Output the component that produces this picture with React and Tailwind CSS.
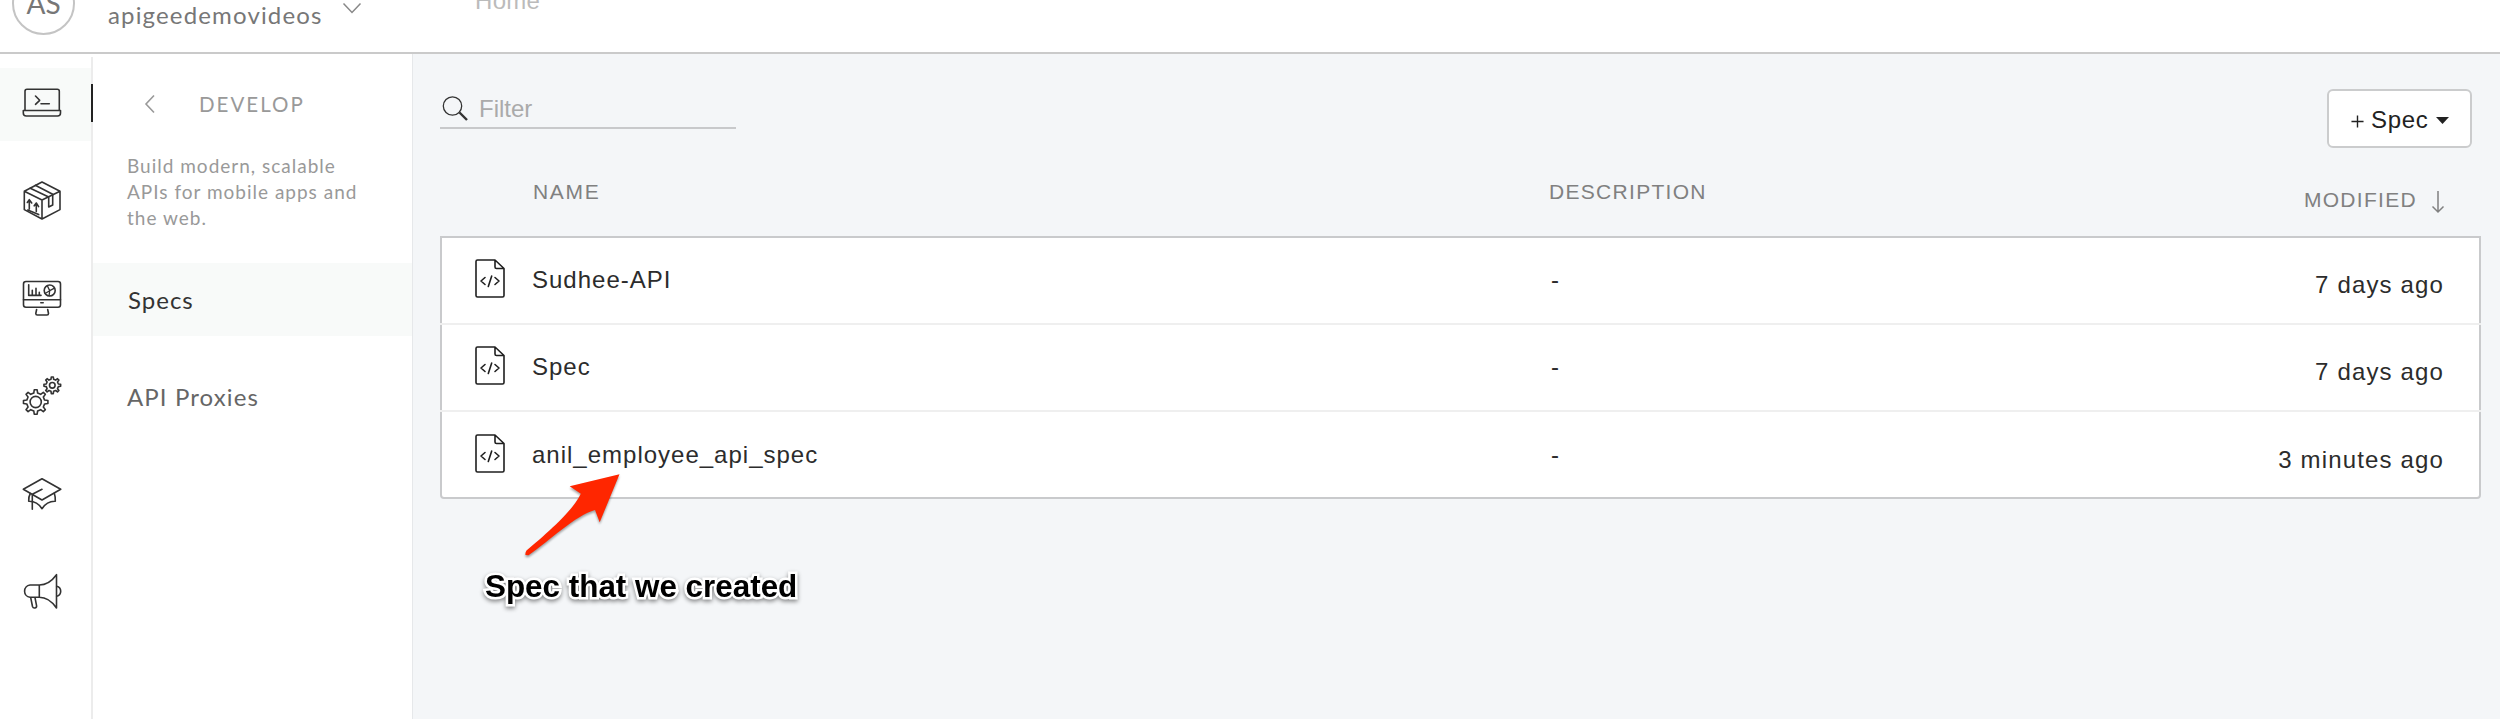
import React from "react";

function gearPath(cx, cy, outer, inner, teeth) {
  const pts = [];
  const step = (Math.PI * 2) / teeth;
  const at = (r, a) => `${(cx + r * Math.cos(a)).toFixed(2)} ${(cy + r * Math.sin(a)).toFixed(2)}`;
  for (let i = 0; i < teeth; i++) {
    const a = i * step - Math.PI / 2;
    pts.push(at(inner, a - step * 0.27), at(outer, a - step * 0.15), at(outer, a + step * 0.15), at(inner, a + step * 0.27));
  }
  return `M${pts.join("L")}Z`;
}

function RailIcon({ children }) {
  return (
    <svg className="h-10 w-10 overflow-visible" viewBox="0 0 40 40" fill="none" stroke="#333" strokeWidth="1.6" strokeLinecap="round" strokeLinejoin="round">
      {children}
    </svg>
  );
}

const railIcons = [
  <RailIcon key="develop">
    <path d="M3 26.3V7.3q0-2 2-2h30.300q2 0 2 2v19" />
    <path d="M1.300 26.500h37.200v2.500q0 3-3 3H4.300q-3 0-3-3z" />
    <path d="M13.500 12l4.200 4.300-4.200 4M19 19.700h8.300" />
  </RailIcon>,
  <RailIcon key="publish">
    <path d="M20 0L38 9.300V27.600L20 37 2.300 27.600V9.300zM2.300 9.300L20 18l18-8.700M20 18v19" />
    <path d="M8.300 6.200L26.700 15v10l4-2V12.300L13.300 3.300" />
    <path d="M7.300 27V18M5.300 20.500L7.300 17.700l2.400 3.300M14.300 29.500V21.300M12.200 23.800l2.100-2.800 2.300 3.600M5.700 28l11 4.600" />
  </RailIcon>,
  <RailIcon key="analyze">
    <rect x="1.500" y="1.500" width="37" height="25.800" rx="2.500" />
    <path d="M1.500 19.700h37M18.800 22.700h2.400M14.600 29.500l-.8 4q0 1.500 1.500 1.500h9.700q1.500 0 1.500-1.500l-.8-4" />
    <path d="M6.700 4.800v10.600H19M10.300 15V10.200M14 15V8.200M17.300 15V12.200" />
    <circle cx="27.700" cy="10.500" r="5.500" />
    <path d="M32.500 8.200l-4.800 2.500-4.700 2.800M27.700 10.700L25.300 5.600M27.700 10.700l-.6 5" strokeWidth="1.3" />
  </RailIcon>,
  <RailIcon key="admin">
    <path d={gearPath(13.7, 24, 12.300, 9.100, 8)} />
    <circle cx="13.700" cy="24" r="5.600" />
    <path d={gearPath(30.300, 7.300, 8.400, 6.200, 8)} />
    <circle cx="30.300" cy="7.300" r="2.800" />
  </RailIcon>,
  <RailIcon key="learn">
    <path d="M20 2.700L38.700 13.300 20 24 1.300 13.300zM20 13.300l-9.700 5v15" />
    <path d="M8.300 17.500q-2 3.500-1.600 7.800 8.300-.3 13.300 7.400 5-7.700 13.300-7.400.2-4.500-1-8" />
  </RailIcon>,
  <RailIcon key="announce">
    <path d="M17.300 11H8a6.200 6.200 0 0 0 0 12.300h9.300zM17.300 11Q27 11 34.500.7V34Q27 23.300 17.300 23.300" />
    <path d="M34.700 12.300q4 1 4 5t-4 5M8.700 23.700l1.800 8.800q.6 1.800 2.300 1.500 2-.4 1.800-2.200L13 23.700" />
  </RailIcon>,
];

function FileIcon() {
  return (
    <svg className="h-10 w-8 shrink-0" viewBox="0 0 32 40" fill="none" stroke="#1f1f1f" strokeWidth="1.600" strokeLinejoin="round" strokeLinecap="round">
      <path d="M21 1H3.500Q2 1 2 2.500v34Q2 38 3.500 38h25q1.500 0 1.500-1.500V9.500zv7q0 1.500 1.500 1.500H30" />
      <path d="M11 18.500l-4 3.500 4 3.500M21 18.500l4 3.500-4 3.500M17.700 17l-3.400 10.500" />
    </svg>
  );
}

const specs = [
  { name: "Sudhee-API", modified: "7 days ago" },
  { name: "Spec", modified: "7 days ago" },
  { name: "anil_employee_api_spec", modified: "3 minutes ago" },
];

export default function App() {
  return (
    <div className="relative flex h-[719px] w-[2500px] flex-col overflow-hidden bg-white font-['Liberation_Sans',Arial,sans-serif]">
      <header className="-mt-[46px] flex h-[100px] shrink-0 items-center border-b-2 border-[#cacaca] bg-white pl-3">
        <div className="flex h-[63px] w-[63px] items-center justify-center rounded-full border-2 border-[#c4c4c4] font-[Lato,sans-serif] text-[28px] text-[#777]">AS</div>
        <div className="mt-[24px] ml-[33px] w-[234px] font-[Lato,sans-serif] text-[24px] leading-[30px] tracking-[1.150px] text-[#777]">apigeedemovideos</div>
        <svg className="mt-[9px] h-3 w-5" viewBox="0 0 20 12" fill="none" stroke="#888" strokeWidth="1.500"><path d="M1.500 1.500L10 10.500l8.500-9" /></svg>
        <div className="-mt-[5px] ml-[113px] text-[24px] leading-[30px] tracking-[0.300px] text-[#bbb]">Home</div>
      </header>

      <div className="flex min-h-0 flex-1">
        <nav className="flex w-[91px] shrink-0 flex-col gap-[25px] pt-[14px]">
          {railIcons.map((icon, i) => (
            <div key={i} className={i === 0 ? "flex h-[73px] bg-[#f8faf9] pt-4 pl-[22px]" : "flex h-[73px] pt-4 pl-[22px]"}>{icon}</div>
          ))}
        </nav>
        <div className="mt-[3px] w-[2px] shrink-0 bg-[#ececec] pt-[27px]">
          <div className="h-[38px] bg-[#222]" />
        </div>

        <aside className="flex w-[320px] shrink-0 flex-col border-r border-[#e6e8ea] font-[Lato,sans-serif]">
          <div className="mt-[35px] flex h-[30px] items-center pl-[51px]">
            <svg className="h-5 w-3" viewBox="0 0 12 20" fill="none" stroke="#999" strokeWidth="1.600"><path d="M10 1.500L2 10l8 8.500" /></svg>
            <span className="ml-[43px] text-[20.500px] tracking-[2px] text-[#999]">DEVELOP</span>
          </div>
          <p className="mt-[34px] pl-[34px] text-[19px] leading-[26px] tracking-[1px] text-[#999]">
            Build modern, scalable<br />APIs for mobile apps and<br />the web.
          </p>
          <div className="mt-[32px] flex h-[73px] items-center bg-[#f8faf9] pl-[35px] text-[24px] tracking-[1px] text-[#333]">Specs</div>
          <div className="mt-[24px] flex h-[73px] items-center pl-[34px] text-[24px] tracking-[1.100px] text-[#666]">API Proxies</div>
        </aside>

        <main className="flex flex-1 flex-col bg-[#f4f6f8] pr-[19px] pl-[27px]">
          <div className="flex h-[94px] items-start justify-between pt-[35px] pr-[9px]">
            <div className="flex h-[40px] w-[296px] items-center border-b-2 border-[#c8c9cb]">
              <svg className="mt-[2px] ml-[2px] h-7 w-7" viewBox="0 0 28 28" fill="none" stroke="#333"><circle cx="10.500" cy="11" r="9.200" strokeWidth="1.300" /><path d="M17.500 17.500l7.500 7.500" strokeWidth="2.400" /></svg>
              <span className="mt-[2px] ml-[9px] text-[24px] leading-[30px] text-[#aaa]">Filter</span>
            </div>
            <button className="flex h-[59px] w-[145px] items-center rounded-md border-2 border-[#cbcccd] bg-white pl-[22px] text-[24px] leading-[30px] tracking-[0.700px] text-[#222]">
              <svg className="mt-[5px] h-[13px] w-[13px]" viewBox="0 0 14 14" stroke="#222" strokeWidth="1.500"><path d="M7 .5v13M.5 7h13" /></svg>
              <span className="mt-[2px] ml-[7px]">Spec</span>
              <svg className="mt-[3px] ml-[7px] h-[7px] w-[13px]" viewBox="0 0 13 7" fill="#222"><path d="M0 0h13L6.500 7z" /></svg>
            </button>
          </div>

          <div className="flex h-[88px] text-[21px] leading-[30px] tracking-[1.300px] text-[#808080]">
            <div className="w-[1109px] pt-[29px] pl-[93px]"><span className="tracking-[1.700px]">NAME</span></div>
            <div className="flex-1 pt-[29px]">DESCRIPTION</div>
            <div className="flex pt-[37px] pr-[36px]">
              MODIFIED
              <svg className="mt-[5px] ml-[14px] h-6 w-[14px]" viewBox="0 0 14 24" fill="none" stroke="#808080" strokeWidth="1.500"><path d="M7 1v21M1.500 16.500L7 22l5.500-5.500" /></svg>
            </div>
          </div>

          <div className="grid h-[263px] grid-rows-[87px_87px_85px] rounded-b-[4px] border-2 border-[#c9cacc] bg-white text-[24px] leading-[30px] tracking-[1px] text-[#2c2c2c]">
            {specs.map((s, i) => (
              <div key={s.name} className={i < 2 ? "-mx-[2px] flex border-b-2 border-[#efefef]" : "-mx-[2px] flex pt-px"}>
                <div className="flex w-[1111px] pt-[21px] pl-[34px]">
                  <FileIcon />
                  <span className="mt-[6px] ml-[26px]">{s.name}</span>
                </div>
                <div className="flex-1 pt-[27px]">-</div>
                <div className="pt-[32px] pr-[37px] tracking-[1.150px]">{s.modified}</div>
              </div>
            ))}
          </div>
        </main>
      </div>

      <svg className="absolute top-[460px] left-[510px] h-[110px] w-[130px] drop-shadow-[0_2px_1px_rgba(0,0,0,0.35)]" viewBox="510 460 130 110" fill="#ff2600">
        <path d="M619.500 474.300L569.700 486.300 580.800 493.700C573 511 545 535 526.500 550.500Q525 553 525.500 555L528.500 555.300C549 541 576 515 595 510L599.700 522.300z" />
      </svg>
      <div className="absolute top-[567px] left-[485px] text-[31.400px] leading-[40px] font-bold whitespace-nowrap text-black drop-shadow-[0_2px_2px_rgba(0,0,0,0.45)] [paint-order:stroke_fill] [-webkit-text-stroke:5px_white]">Spec that we created</div>
    </div>
  );
}
